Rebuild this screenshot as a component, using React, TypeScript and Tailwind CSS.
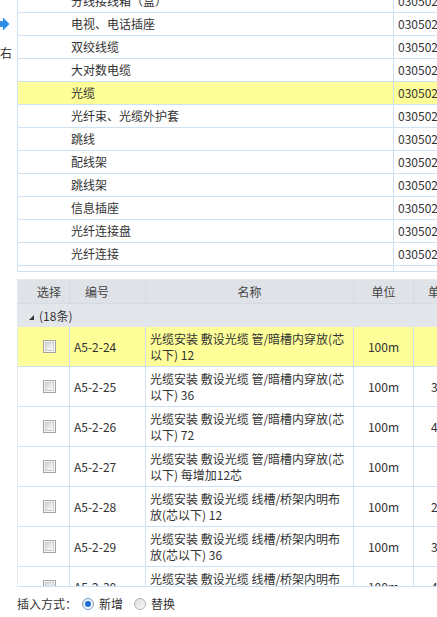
import { Fragment } from "react"

const upperRows = [
  "分线接线箱（盒）",
  "电视、电话插座",
  "双绞线缆",
  "大对数电缆",
  "光缆",
  "光纤束、光缆外护套",
  "跳线",
  "配线架",
  "跳线架",
  "信息插座",
  "光纤连接盘",
  "光纤连接",
]

type QuotaRow = {
  code: string
  name: string
  unit: string
  price: string
}

const quotaRows: QuotaRow[] = [
  { code: "A5-2-24", name: "光缆安装 敷设光缆 管/暗槽内穿放(芯以下) 12", unit: "100m", price: "" },
  { code: "A5-2-25", name: "光缆安装 敷设光缆 管/暗槽内穿放(芯以下) 36", unit: "100m", price: "316.52" },
  { code: "A5-2-26", name: "光缆安装 敷设光缆 管/暗槽内穿放(芯以下) 72", unit: "100m", price: "428.15" },
  { code: "A5-2-27", name: "光缆安装 敷设光缆 管/暗槽内穿放(芯以下) 每增加12芯", unit: "100m", price: "" },
  { code: "A5-2-28", name: "光缆安装 敷设光缆 线槽/桥架内明布放(芯以下) 12", unit: "100m", price: "236.40" },
  { code: "A5-2-29", name: "光缆安装 敷设光缆 线槽/桥架内明布放(芯以下) 36", unit: "100m", price: "311.87" },
  { code: "A5-2-30", name: "光缆安装 敷设光缆 线槽/桥架内明布放(芯以下) 72", unit: "100m", price: "402.33" },
]

const Checkbox = () => (
  <span className="block w-[13px] h-[13px] border border-[#a3a3a3] p-[1px] bg-[#f4f4f4]">
    <span className="block w-full h-full border border-[#cfcfcf] bg-linear-to-br from-[#d9d9d9] to-[#f7f7f7]" />
  </span>
)

const Radio = ({ checked }: { checked?: boolean }) => (
  <span
    className={
      checked
        ? "flex items-center justify-center w-[12px] h-[12px] rounded-full border border-[#7f9db9] bg-linear-to-br from-[#dfe9f5] to-[#ffffff]"
        : "flex items-center justify-center w-[12px] h-[12px] rounded-full border border-[#b5b5b5] bg-linear-to-br from-[#dcdcdc] to-[#fbfbfb]"
    }
  >
    {checked && <span className="block w-[6px] h-[6px] rounded-full bg-[#1d6fd6]" />}
  </span>
)

export default function App() {
  return (
    <div className="w-[437px] h-[617px] overflow-hidden bg-white text-[12px] leading-[16px] text-[#333] font-['Noto_Sans_CJK_SC','Noto_Sans',sans-serif]">
      {/* top: tree list */}
      <div className="flex h-[272px]">
        <div className="w-[17px] shrink-0 overflow-hidden">
          <svg width="10" height="14" viewBox="0 0 10 14" className="mt-[17px] block">
            <polygon points="0,4 3,4 3,0.5 9.5,7 3,13.5 3,10 0,10" fill="#2e8de6" />
          </svg>
          <div className="mt-[14px] w-[12px] overflow-hidden whitespace-nowrap flex justify-end">
            <span>向右</span>
          </div>
        </div>
        <div className="w-[460px] shrink-0 h-[272px] overflow-hidden border-l border-b border-[#cfe2f4]">
          <div className="-mt-[10px]">
            {upperRows.map((name) => (
              <div
                key={name}
                className={`flex h-[23px] border-b border-[#cfe2f4] ${name === "光缆" ? "bg-[#ffff99]" : ""}`}
              >
                <div className="w-[376px] shrink-0 border-r border-[#cfe2f4] pl-[53px] flex items-center">
                  {name}
                </div>
                <div className="pl-[4px] flex items-center">030502</div>
              </div>
            ))}
            <div className="flex h-[10px]">
              <div className="w-[376px] shrink-0 border-r border-[#cfe2f4]" />
            </div>
          </div>
        </div>
      </div>

      {/* bottom: quota table */}
      <div className="h-[7px]" />
      <div className="ml-[17px] w-[460px] border-t border-l border-[#e2ebf4]">
        <div className="flex h-[24px] bg-[#dfe2e7] border-b border-[#d3dbe4] text-[#444]">
          <div className="w-[52px] shrink-0 border-r border-[#d0dbe7] pl-[19px] flex items-center">选择</div>
          <div className="w-[76px] shrink-0 border-r border-[#d0dbe7] pl-[15px] flex items-center">编号</div>
          <div className="w-[208px] shrink-0 border-r border-[#d0dbe7] flex items-center justify-center">名称</div>
          <div className="w-[60px] shrink-0 border-r border-[#d0dbe7] flex items-center justify-center">单位</div>
          <div className="pl-[14px] flex items-center">单价</div>
        </div>
        <div className="flex h-[23px] items-center bg-[#e3e6ea] pl-[11px] gap-[5px]">
          <svg width="5" height="5" viewBox="0 0 5 5" className="mt-[4px]">
            <polygon points="5,0 5,5 0,5" fill="#333" />
          </svg>
          <span>(18条)</span>
        </div>
        <div className="h-[260px] overflow-hidden border-b border-[#cfe2f4]">
          {quotaRows.map((row, i) => (
            <Fragment key={row.code}>
              <div className={`flex h-[40px] shrink-0 border-b border-[#cfe2f4] ${i === 0 ? "bg-[#ffff99]" : ""}`}>
                <div className="w-[52px] shrink-0 border-r border-[#cfe2f4] pl-[25px] flex items-center">
                  <Checkbox />
                </div>
                <div className="w-[76px] shrink-0 border-r border-[#cfe2f4] pl-[4px] flex items-center">
                  {row.code}
                </div>
                <div className="w-[208px] shrink-0 border-r border-[#cfe2f4] pl-[4px] pr-[6px] flex items-center">
                  <span>{row.name}</span>
                </div>
                <div className="w-[60px] shrink-0 border-r border-[#cfe2f4] flex items-center justify-center">
                  {row.unit}
                </div>
                <div className="pl-[17px] flex items-center whitespace-nowrap">{row.price}</div>
              </div>
            </Fragment>
          ))}
        </div>
      </div>

      <div className="flex items-center pl-[17px] pt-[9px]">
        <span>插入方式：</span>
        <span className="ml-[5px]"><Radio checked /></span>
        <span className="ml-[5px]">新增</span>
        <span className="ml-[11px]"><Radio /></span>
        <span className="ml-[5px]">替换</span>
      </div>
    </div>
  )
}
